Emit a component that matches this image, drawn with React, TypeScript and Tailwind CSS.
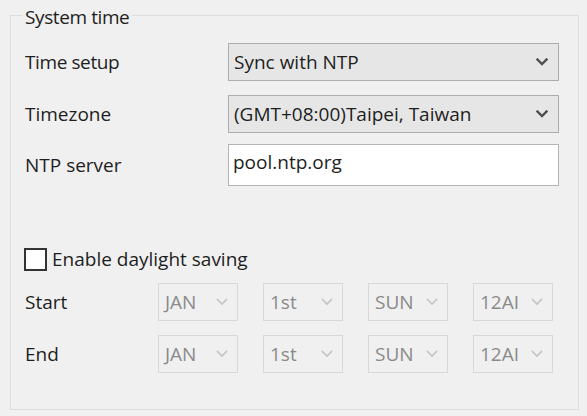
import React from "react";

function Chevron({ color, w = 12, sw = 2.4 }: { color: string; w?: number; sw?: number }) {
  return (
    <svg width={w} height={8} viewBox="0 0 12 8" fill="none">
      <path d="M1.5 1.5 L6 6 L10.5 1.5" stroke={color} strokeWidth={sw} strokeLinecap="square" />
    </svg>
  );
}

function Combo({ value }: { value: string }) {
  return (
    <div className="w-[331px] h-[38px] border border-[#adadad] bg-[#e6e6e6] flex items-center justify-between pl-[5px] pr-[10px]">
      <span className="leading-none">{value}</span>
      <Chevron color="#505050" />
    </div>
  );
}

function Small({ value }: { value: string }) {
  return (
    <div className="w-[80px] h-[38px] border border-[#d8d8d8] bg-[#f0f0f0] flex items-center justify-between pl-[6px] pr-[9px] text-[#8a8a8a]">
      <span className="leading-none">{value}</span>
      <Chevron color="#c4c4c4" w={12} sw={1.6} />
    </div>
  );
}

function DstRow({ label }: { label: string }) {
  return (
    <div className="flex items-center h-[38px]">
      <div className="w-[133px]">{label}</div>
      <div className="flex gap-[25px]">
        <Small value="JAN" />
        <Small value="1st" />
        <Small value="SUN" />
        <Small value="12AI" />
      </div>
    </div>
  );
}

export default function App() {
  return (
    <div className="w-[587px] h-[416px] bg-[#f0f0f0] pl-[10px] pr-[8px] pt-[5px] font-['Open_Sans',sans-serif] text-[19px] text-[#1e1e1e]">
      <fieldset className="border border-[#dcdcdc] h-[405px] pl-[14px] pr-[18px]">
        <legend className="-ml-[3px] px-[3px] leading-[20px]">
          <span className="relative top-[2px] tracking-[-0.4px]">System time</span>
        </legend>
        <div className="flex items-center h-[38px] mt-[18px]">
          <div className="w-[203px] tracking-[-0.4px]">Time setup</div>
          <Combo value="Sync with NTP" />
        </div>
        <div className="flex items-center h-[38px] mt-[14px]">
          <div className="w-[203px]">Timezone</div>
          <Combo value="(GMT+08:00)Taipei, Taiwan" />
        </div>
        <div className="flex items-center h-[42px] mt-[11px]">
          <div className="w-[203px]">NTP server</div>
          <div className="w-[331px] h-[42px] border border-[#b4b4b4] bg-white pl-[4px] pt-[8px] leading-none">pool.ntp.org</div>
        </div>
        <div className="flex items-center h-[23px] mt-[62px] -ml-[1px]">
          <div className="w-[23px] h-[23px] border-2 border-[#333333] bg-white" />
          <span className="ml-[5px]">Enable daylight saving</span>
        </div>
        <div className="mt-[12px]">
          <DstRow label="Start" />
        </div>
        <div className="mt-[14px]">
          <DstRow label="End" />
        </div>
      </fieldset>
    </div>
  );
}
